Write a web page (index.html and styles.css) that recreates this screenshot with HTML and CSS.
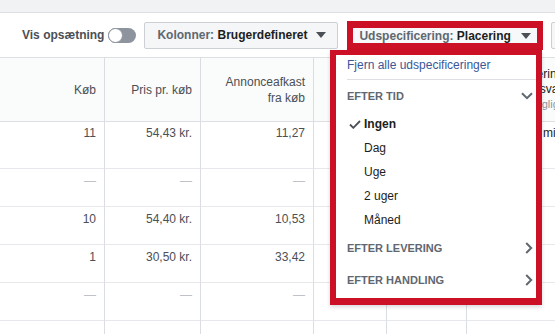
FILE: index.html
```html
<!DOCTYPE html>
<html lang="da">
<head>
<meta charset="utf-8">
<title>Annoncer</title>
<link rel="stylesheet" href="styles.css">
</head>
<body>
<div class="page">
  <div class="topstrip"></div>
  <div class="toolbar">
    <span class="label">Vis opsætning</span>
    <span class="toggle"><span class="knob"></span></span>
    <div class="btn btn-cols">
      <span class="btn-text"><span class="muted">Kolonner:</span> Brugerdefineret</span>
      <span class="caret"></span>
    </div>
    <div class="btn-outline">
      <div class="btn-inner">
        <span class="btn-text"><span class="muted">Udspecificering:</span> Placering</span>
        <span class="caret"></span>
      </div>
    </div>
    <div class="btn btn-more"></div>
  </div>

  <div class="table">
    <div class="th">Køb</div>
    <div class="th">Pris pr. køb</div>
    <div class="th">Annonceafkast<br>fra køb</div>
    <div class="th"></div>
    <div class="th"></div>
    <div class="th th-left"><span>Tidsannoncering</span><span>Gennemsnitsvare</span><span class="sub">Opdateres dagligt</span></div>

    <div class="td r1">11</div><div class="td r1">54,43 kr.</div><div class="td r1">11,27</div><div class="td r1"></div><div class="td r1"></div><div class="td r1 td-left">Slutter om 5 min</div>

    <div class="td dash">—</div><div class="td dash">—</div><div class="td dash">—</div><div class="td"></div><div class="td"></div><div class="td"></div>

    <div class="td">10</div><div class="td">54,40 kr.</div><div class="td">10,53</div><div class="td"></div><div class="td"></div><div class="td"></div>

    <div class="td">1</div><div class="td">30,50 kr.</div><div class="td">33,42</div><div class="td"></div><div class="td"></div><div class="td"></div>

    <div class="td dash">—</div><div class="td dash">—</div><div class="td dash">—</div><div class="td"></div><div class="td"></div><div class="td"></div>

    <div class="td last"></div><div class="td last"></div><div class="td last"></div><div class="td last"></div><div class="td last"></div><div class="td last"></div>
  </div>

  <div class="menu">
    <div class="menu-link">Fjern alle udspecificeringer</div>
    <div class="divider"></div>
    <div class="section"><span>EFTER TID</span>
      <svg class="chev-down" width="12" height="8" viewBox="0 0 12 8"><path d="M1 1.2 L6 6.2 L11 1.2" fill="none" stroke="#606770" stroke-width="2"/></svg>
    </div>
    <div class="item selected"><span class="slot"><svg width="12" height="9" viewBox="0 0 12 9"><path d="M1 4.5 L4.3 7.8 L11 1" fill="none" stroke="#4b4f56" stroke-width="1.8"/></svg></span>Ingen</div>
    <div class="item"><span class="slot"></span>Dag</div>
    <div class="item"><span class="slot"></span>Uge</div>
    <div class="item"><span class="slot"></span>2 uger</div>
    <div class="item"><span class="slot"></span>Måned</div>
    <div class="section"><span>EFTER LEVERING</span>
      <svg class="chev-right" width="8" height="12" viewBox="0 0 8 12"><path d="M1.2 1 L6.2 6 L1.2 11" fill="none" stroke="#606770" stroke-width="2"/></svg>
    </div>
    <div class="section"><span>EFTER HANDLING</span>
      <svg class="chev-right" width="8" height="12" viewBox="0 0 8 12"><path d="M1.2 1 L6.2 6 L1.2 11" fill="none" stroke="#606770" stroke-width="2"/></svg>
    </div>
  </div>
</div>
</body>
</html>
```

FILE: styles.css
```css
* { box-sizing: border-box; }

html, body {
  margin: 0;
  padding: 0;
  background: #ffffff;
}

body {
  font-family: "Liberation Sans", Arial, sans-serif;
  font-size: 12px;
  color: #4b4f56;
}

.page {
  position: relative;
  width: 555px;
  height: 334px;
  overflow: hidden;
}

.topstrip {
  height: 13px;
  background: #f1f2f4;
  border-bottom: 1px solid #dddfe2;
}

.toolbar {
  height: 45px;
  display: flex;
  align-items: center;
  padding-left: 22px;
  border-bottom: 1px solid #dddfe2;
  white-space: nowrap;
  overflow: hidden;
}

.label {
  font-weight: bold;
  color: #4b4f56;
  margin-right: 4px;
}

.toggle {
  position: relative;
  flex: none;
  width: 28px;
  height: 15px;
  border-radius: 8px;
  background: #8d949e;
}

.knob {
  position: absolute;
  left: 0;
  top: 0;
  width: 15px;
  height: 15px;
  border-radius: 50%;
  background: #ffffff;
  border: 1px solid #8d949e;
}

.btn {
  flex: none;
  display: flex;
  align-items: center;
  height: 27px;
  background: #f5f6f7;
  border: 1px solid #ccd0d5;
  border-radius: 2px;
}

.btn-cols {
  width: 194px;
  margin-left: 8px;
  padding: 0 11px 0 12px;
}

.btn-text {
  font-weight: bold;
  color: #1c1e21;
}

.muted {
  color: #606770;
}

.caret {
  margin-left: auto;
  width: 0;
  height: 0;
  border-left: 5px solid transparent;
  border-right: 5px solid transparent;
  border-top: 6px solid #4b4f56;
}

.btn-outline {
  flex: none;
  width: 196px;
  height: 29px;
  margin-left: 9px;
  margin-top: 1px;
  border-style: solid;
  border-color: #cc1126;
  border-width: 7px 6px 7px 6px;
}

.btn-inner {
  height: 100%;
  display: flex;
  align-items: center;
  padding: 0 6px 0 6px;
  background: #f7f8f9;
}

.btn-more {
  width: 40px;
  margin-left: 8px;
}

.table {
  display: grid;
  grid-template-columns: 105px 96px 113px 73px 80px 120px;
  grid-template-rows: 64px 47px 38px 38px 38px 38px 20px;
  background: #ffffff;
}

.th, .td {
  border-right: 1px solid #dadde1;
  border-bottom: 1px solid #e6e8eb;
}

.th {
  display: flex;
  align-items: center;
  justify-content: flex-end;
  text-align: right;
  padding: 0 8px 0 8px;
  line-height: 16px;
  color: #4b4f56;
  background: #fafbfb;
  border-bottom-color: #dddfe2;
}

.th-left {
  flex-direction: column;
  align-items: flex-start;
  justify-content: center;
  text-align: left;
  white-space: nowrap;
  line-height: 15px;
  color: #1c1e21;
}

.sub {
  font-size: 11px;
  color: #90949c;
}

.td {
  text-align: right;
  padding: 5px 8px 0 8px;
  line-height: 14px;
  color: #4b4f56;
  white-space: nowrap;
}

.td.r1 {
  padding-top: 4px;
}

.td-left {
  text-align: left;
  color: #1c1e21;
}

.dash {
  color: #bec3c9;
}

.td.last {
  border-bottom: none;
}

.menu {
  position: absolute;
  left: 330px;
  top: 50px;
  width: 212px;
  height: 255px;
  background: #ffffff;
  border-style: solid;
  border-color: #cc1126;
  border-width: 5px 6px 7px 6px;
  box-shadow: 0 2px 4px rgba(0, 0, 0, 0.15);
  white-space: nowrap;
}

.menu-link {
  height: 24px;
  padding-left: 11px;
  line-height: 20px;
  color: #385898;
}

.divider {
  height: 1px;
  margin-left: 11px;
  background: #dddfe2;
}

.section {
  height: 32px;
  display: flex;
  align-items: center;
  justify-content: space-between;
  padding: 0 3px 0 11px;
  font-size: 11px;
  font-weight: bold;
  color: #606770;
}

.item {
  height: 24px;
  display: flex;
  align-items: center;
  color: #1c1e21;
}

.item.selected {
  font-weight: bold;
}

.slot {
  flex: none;
  width: 28px;
  display: flex;
  align-items: center;
  padding-left: 13px;
}

.chev-down, .chev-right {
  display: block;
}
```
